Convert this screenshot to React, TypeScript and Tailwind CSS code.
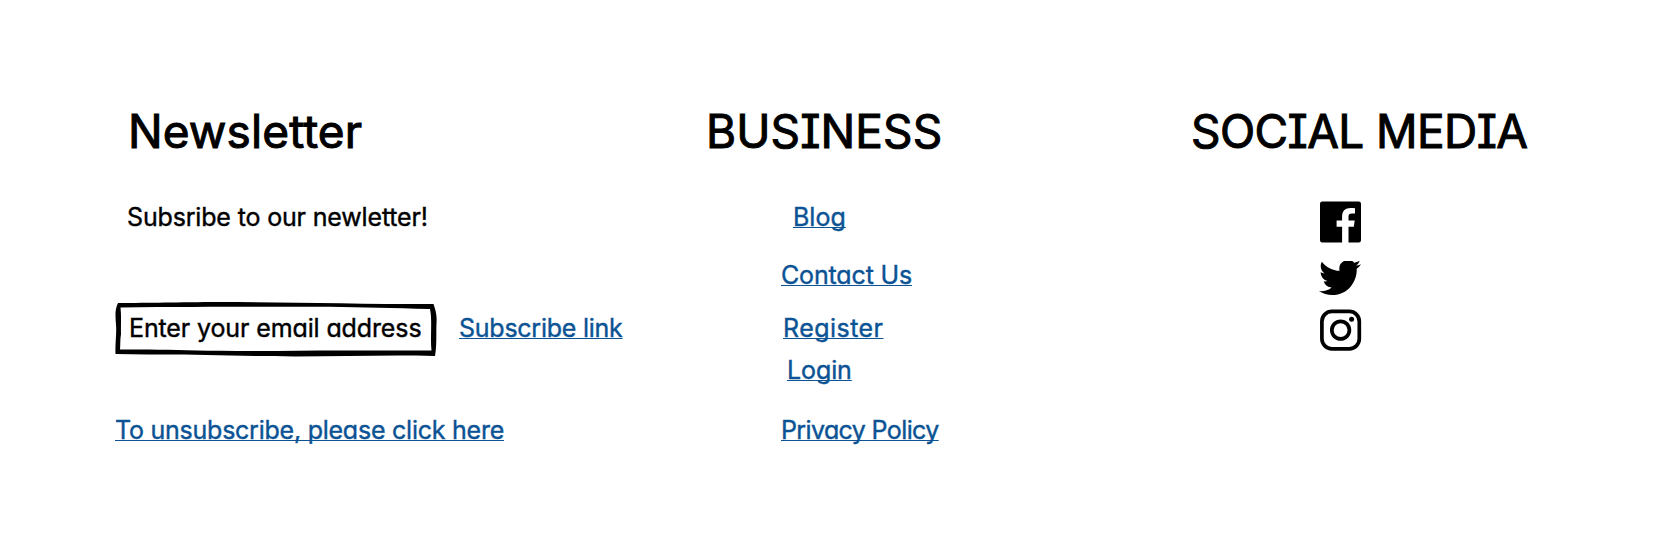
import type { ReactNode } from "react";

const sketch =
  "font-['Inter','Noto_Sans',sans-serif] [font-feature-settings:'cv11','cv08','calt'_0] whitespace-nowrap [stroke-linejoin:round]";

function Heading({ className, children }: { className: string; children: ReactNode }) {
  return (
    <h2 className={`h-[56px] text-[46px] leading-[56px] font-normal [-webkit-text-stroke:1px_#000] ${className}`}>
      {children}
    </h2>
  );
}

function Link({ className, children }: { className: string; children: ReactNode }) {
  return (
    <a
      href="#"
      className={`block h-[30px] w-fit text-[25px] leading-[30px] text-[#0b5394] underline decoration-[1.3px] underline-offset-[1px] [-webkit-text-stroke:0.4px_#0b5394] [text-decoration-skip-ink:none] ${className}`}
    >
      {children}
    </a>
  );
}

export default function App() {
  return (
    <footer className={`flex h-[546px] w-[1653px] overflow-hidden bg-white pt-[103px] text-black ${sketch}`}>
      <section className="w-[706px] pl-[115px]">
        <Heading className="pl-[13px] tracking-[0.1px]">Newsletter</Heading>
        <p className="mt-[43px] h-[30px] pl-[12px] text-[25px] leading-[30px] tracking-[-0.16px] [-webkit-text-stroke:0.4px_#000]">
          Subsribe to our newletter!
        </p>
        <div className="mt-[71px] flex h-[54px]">
          <div className="relative h-[54px] w-[322px]">
            <svg className="absolute inset-0 overflow-visible" width="322" height="54" viewBox="0 0 322 54" aria-hidden="true">
              <path
                fillRule="evenodd"
                d="M3 0C35 0 62-.8 105-1C172-1 240 1 318.5 1C321 8 322 13 321.5 20C321 31 322 42 320 53C275 51.8 228 53.4 180 53.4C122 53.4 75 51 33 51.6L.5 51C0 40 1.8 30 1 22C.5 14-.5 7 3 0ZM5.5 4.5C6.5 13 5.7 22 6 31C5 37 5.5 42 5 46.6C42 45.8 64 47.5 105 47.7C153 48.5 193 47.2 235 47.4C264 47.5 288 47.4 316.5 47.5C315 35 317.5 18 315 6C278 5.2 249 4.2 214 3.8C153 3.8 88 3.6 5.5 4.5Z"
              />
            </svg>
            <p className="h-[54px] pt-[10px] pl-[14px] text-[25px] leading-[30px] tracking-[-0.12px] [-webkit-text-stroke:0.4px_#000]">
              Enter your email address
            </p>
          </div>
          <Link className="mt-[10px] ml-[22px] tracking-[-0.25px]">Subscribe link</Link>
        </div>
        <Link className="mt-[58px] tracking-[-0.24px]">To unsubscribe, please click here</Link>
      </section>

      <nav className="w-[485px]">
        <Heading className="tracking-[0.1px]">BUSINESS</Heading>
        <Link className="mt-[43px] ml-[87px] tracking-[0px]">Blog</Link>
        <Link className="mt-[28px] ml-[75px] tracking-[-0.15px]">Contact Us</Link>
        <Link className="mt-[23px] ml-[77px] tracking-[0.45px]">Register</Link>
        <Link className="mt-[12px] ml-[81px] tracking-[-0.1px]">Login</Link>
        <Link className="mt-[30px] ml-[75px] tracking-[-0.62px]">Privacy Policy</Link>
      </nav>

      <section>
        <Heading className="tracking-[-0.6px]">SOCIAL MEDIA</Heading>
        <div className="mt-[42px] ml-[129px] flex w-[42px] flex-col">
          <svg width="42" height="42" viewBox="0 -0.5 42 42" role="img" aria-label="Facebook">
            <path d="M2.3 0H38.7Q41 0 41 2.3V38.7Q41 41 38.7 41H28.5V25.2H33.8L34.7 19H28.5V15.2C28.5 13.3 29.3 12.1 31.8 12.1H35V6.7C34 6.5 32.5 6.4 30.5 6.4C25.4 6.4 22.1 9.3 22.1 14.7V19H16.6V25.2H22.1V41H2.3Q0 41 0 38.7V2.3Q0 0 2.3 0Z" />
          </svg>
          <svg className="mt-[18px] -ml-px" width="42" height="35" viewBox="0 2.8 24 19.5" preserveAspectRatio="none" role="img" aria-label="Twitter">
            <path d="M23.953 4.57a10 10 0 01-2.825.775 4.958 4.958 0 002.163-2.723c-.951.555-2.005.959-3.127 1.184a4.92 4.92 0 00-8.384 4.482C7.69 8.095 4.067 6.13 1.64 3.162a4.822 4.822 0 00-.666 2.475c0 1.71.87 3.213 2.188 4.096a4.904 4.904 0 01-2.228-.616v.06a4.923 4.923 0 003.946 4.827 4.996 4.996 0 01-2.212.085 4.936 4.936 0 004.604 3.417 9.867 9.867 0 01-6.102 2.105c-.39 0-.779-.023-1.17-.067a13.995 13.995 0 007.557 2.209c9.053 0 13.998-7.496 13.998-13.985 0-.21 0-.42-.015-.63A9.935 9.935 0 0024 4.59z" />
          </svg>
          <svg className="mt-[13px]" width="42" height="42" viewBox="0 -0.5 42 42" fill="none" role="img" aria-label="Instagram">
            <rect x="1.9" y="1.9" width="37.4" height="37.4" rx="10" stroke="#000" strokeWidth="3.7" />
            <circle cx="20.6" cy="20.6" r="8.8" stroke="#000" strokeWidth="3.7" />
            <circle cx="31.6" cy="9.7" r="2.5" fill="#000" />
          </svg>
        </div>
      </section>
    </footer>
  );
}
